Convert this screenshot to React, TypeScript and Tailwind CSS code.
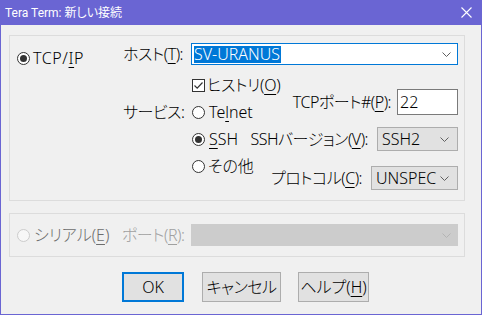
import React from 'react';

const ui = "font-['Noto_Sans','Noto_Sans_CJK_JP',sans-serif] font-light [font-feature-settings:'palt'] text-[16px] leading-none";

function Key({ children }: { children: React.ReactNode }) {
  return <span className="underline decoration-1 underline-offset-[3px]">{children}</span>;
}

function Radio({ checked = false, disabled = false }: { checked?: boolean; disabled?: boolean }) {
  return (
    <span
      className={`flex h-[13px] w-[13px] shrink-0 items-center justify-center rounded-full border ${
        disabled ? 'border-[#cccccc] bg-[#f7f7f7]' : 'border-[#333333] bg-white'
      }`}
    >
      {checked && <span className="h-[7px] w-[7px] rounded-full bg-[#333333]" />}
    </span>
  );
}

function Checkbox() {
  return (
    <span className="flex h-[13px] w-[13px] shrink-0 items-center justify-center border border-[#333333] bg-white">
      <svg width="11" height="11" viewBox="0 0 11 11">
        <path d="M1.5 5.5 L4.2 8.2 L9.5 2.5" fill="none" stroke="#333333" strokeWidth="1.2" />
      </svg>
    </span>
  );
}

function Chevron({ color = '#606060' }: { color?: string }) {
  return (
    <svg width="9" height="5" viewBox="0 0 9 5" className="shrink-0">
      <path d="M0.5 0.5 L4.5 4.5 L8.5 0.5" fill="none" stroke={color} strokeWidth="1" />
    </svg>
  );
}

function DropDown({ value, width }: { value: string; width: string }) {
  return (
    <div className={`flex h-[24px] ${width} items-center justify-between border border-[#adadad] bg-[#e1e1e1] pl-[4px] pr-[8px]`}>
      <span>{value}</span>
      <Chevron />
    </div>
  );
}

export default function App() {
  return (
    <div className={`flex h-[315px] w-[482px] flex-col overflow-hidden border-x border-b border-[#6a65d3] bg-[#f0f0f0] text-black ${ui}`}>
      {/* Title bar */}
      <div className="flex h-[25px] shrink-0 items-center justify-between bg-[#6a65d3] pl-[4px] pr-[9px]">
        <span className="font-['Roboto','Noto_Sans_CJK_JP',sans-serif] text-[12px] font-normal text-white">Tera Term: 新しい接続</span>
        <svg width="11" height="11" viewBox="0 0 11 11">
          <path d="M0.5 0.5 L10.5 10.5 M10.5 0.5 L0.5 10.5" stroke="white" strokeWidth="1.1" />
        </svg>
      </div>

      {/* TCP/IP group */}
      <div className="ml-[8px] mt-[10px] h-[166px] w-[456px] border border-[#dcdcdc]">
        <div className="mt-[7px] flex h-[22px] items-start">
          <div className="mt-[5px] flex h-[20px] w-[113px] items-center gap-[3px] pl-[7px]">
            <Radio checked />
            <span className="tracking-[0.6px]">
              TCP/<Key>I</Key>P
            </span>
          </div>
          <div className="flex h-[22px] w-[68px] items-center whitespace-nowrap tracking-[-0.5px]">
            ホスト(<Key>T</Key>):
          </div>
          <div className="flex h-[22px] w-[267px] items-center justify-between border border-[#0078d7] bg-white pl-[2px] pr-[6px]">
            <span className="flex h-[17px] items-center bg-[#0078d7] pr-px text-white">SV-URANUS</span>
            <Chevron />
          </div>
        </div>

        <div className="flex">
          <div className="w-[113px]" />
          <div className="mt-[37px] flex h-[20px] w-[68px] items-center whitespace-nowrap tracking-[-0.5px]">サービス:</div>
          <div className="flex w-[57px] flex-col gap-[7px] whitespace-nowrap pt-[10px]">
            <div className="flex h-[20px] items-center gap-[2px] pl-px">
              <Checkbox />
              <span className="tracking-[-0.3px]">
                ヒストリ(<Key>O</Key>)
              </span>
            </div>
            <div className="flex h-[20px] items-center gap-[4px] pl-px">
              <Radio />
              <span>
                Te<Key>l</Key>net
              </span>
            </div>
            <div className="flex h-[20px] items-center gap-[4px] pl-px">
              <Radio checked />
              <span>
                <Key>S</Key>SH
              </span>
            </div>
            <div className="flex h-[20px] items-center gap-[3px] pl-px">
              <Radio />
              <span>その他</span>
            </div>
          </div>
          <div className="flex w-[210px] flex-col items-end whitespace-nowrap tracking-[-0.5px]">
            <div className="mt-[24px] flex h-[26px] items-center gap-[6px]">
              <span>
                TCPポート#(<Key>P</Key>):
              </span>
              <div className="flex h-[26px] w-[61px] items-center border border-[#7a7a7a] bg-white pl-[2px] tracking-normal">22</div>
            </div>
            <div className="mt-[12px] flex h-[24px] items-center gap-[9px]">
              <span>
                SSHバージョン(<Key>V</Key>):
              </span>
              <DropDown value="SSH2" width="w-[81px] tracking-normal" />
            </div>
            <div className="mt-[15px] flex h-[24px] items-center gap-[9px]">
              <span>
                プロトコル(<Key>C</Key>):
              </span>
              <DropDown value="UNSPEC" width="w-[87px] tracking-normal" />
            </div>
          </div>
        </div>
      </div>

      {/* Serial group */}
      <div className="ml-[8px] mt-[12px] flex h-[44px] w-[456px] items-center border border-[#dcdcdc] whitespace-nowrap">
        <div className="flex w-[112px] items-center gap-[4px] pl-[7px] text-[#6d6d6d]">
          <Radio disabled />
          <span>
            シリアル(<Key>E</Key>)
          </span>
        </div>
        <div className="w-[69px] tracking-[-0.5px] text-[#a0a0a0]">
          ポート(<Key>R</Key>):
        </div>
        <div className="flex h-[22px] w-[267px] items-center justify-end border border-[#cccccc] bg-[#cccccc] pr-[6px]">
          <Chevron color="#b4b4b4" />
        </div>
      </div>

      {/* Buttons */}
      <div className="ml-[121px] mt-[15px] flex">
        <button className="flex h-[30px] w-[62px] items-center justify-center border-2 border-[#0078d7] bg-[#e1e1e1]">OK</button>
        <button className="ml-[18px] flex h-[30px] w-[79px] items-center justify-center border border-[#adadad] bg-[#e1e1e1] tracking-[-0.5px]">
          キャンセル
        </button>
        <button className="ml-[17px] flex h-[30px] w-[71px] items-center justify-center border border-[#adadad] bg-[#e1e1e1]">
          ヘルプ(<Key>H</Key>)
        </button>
      </div>
    </div>
  );
}
